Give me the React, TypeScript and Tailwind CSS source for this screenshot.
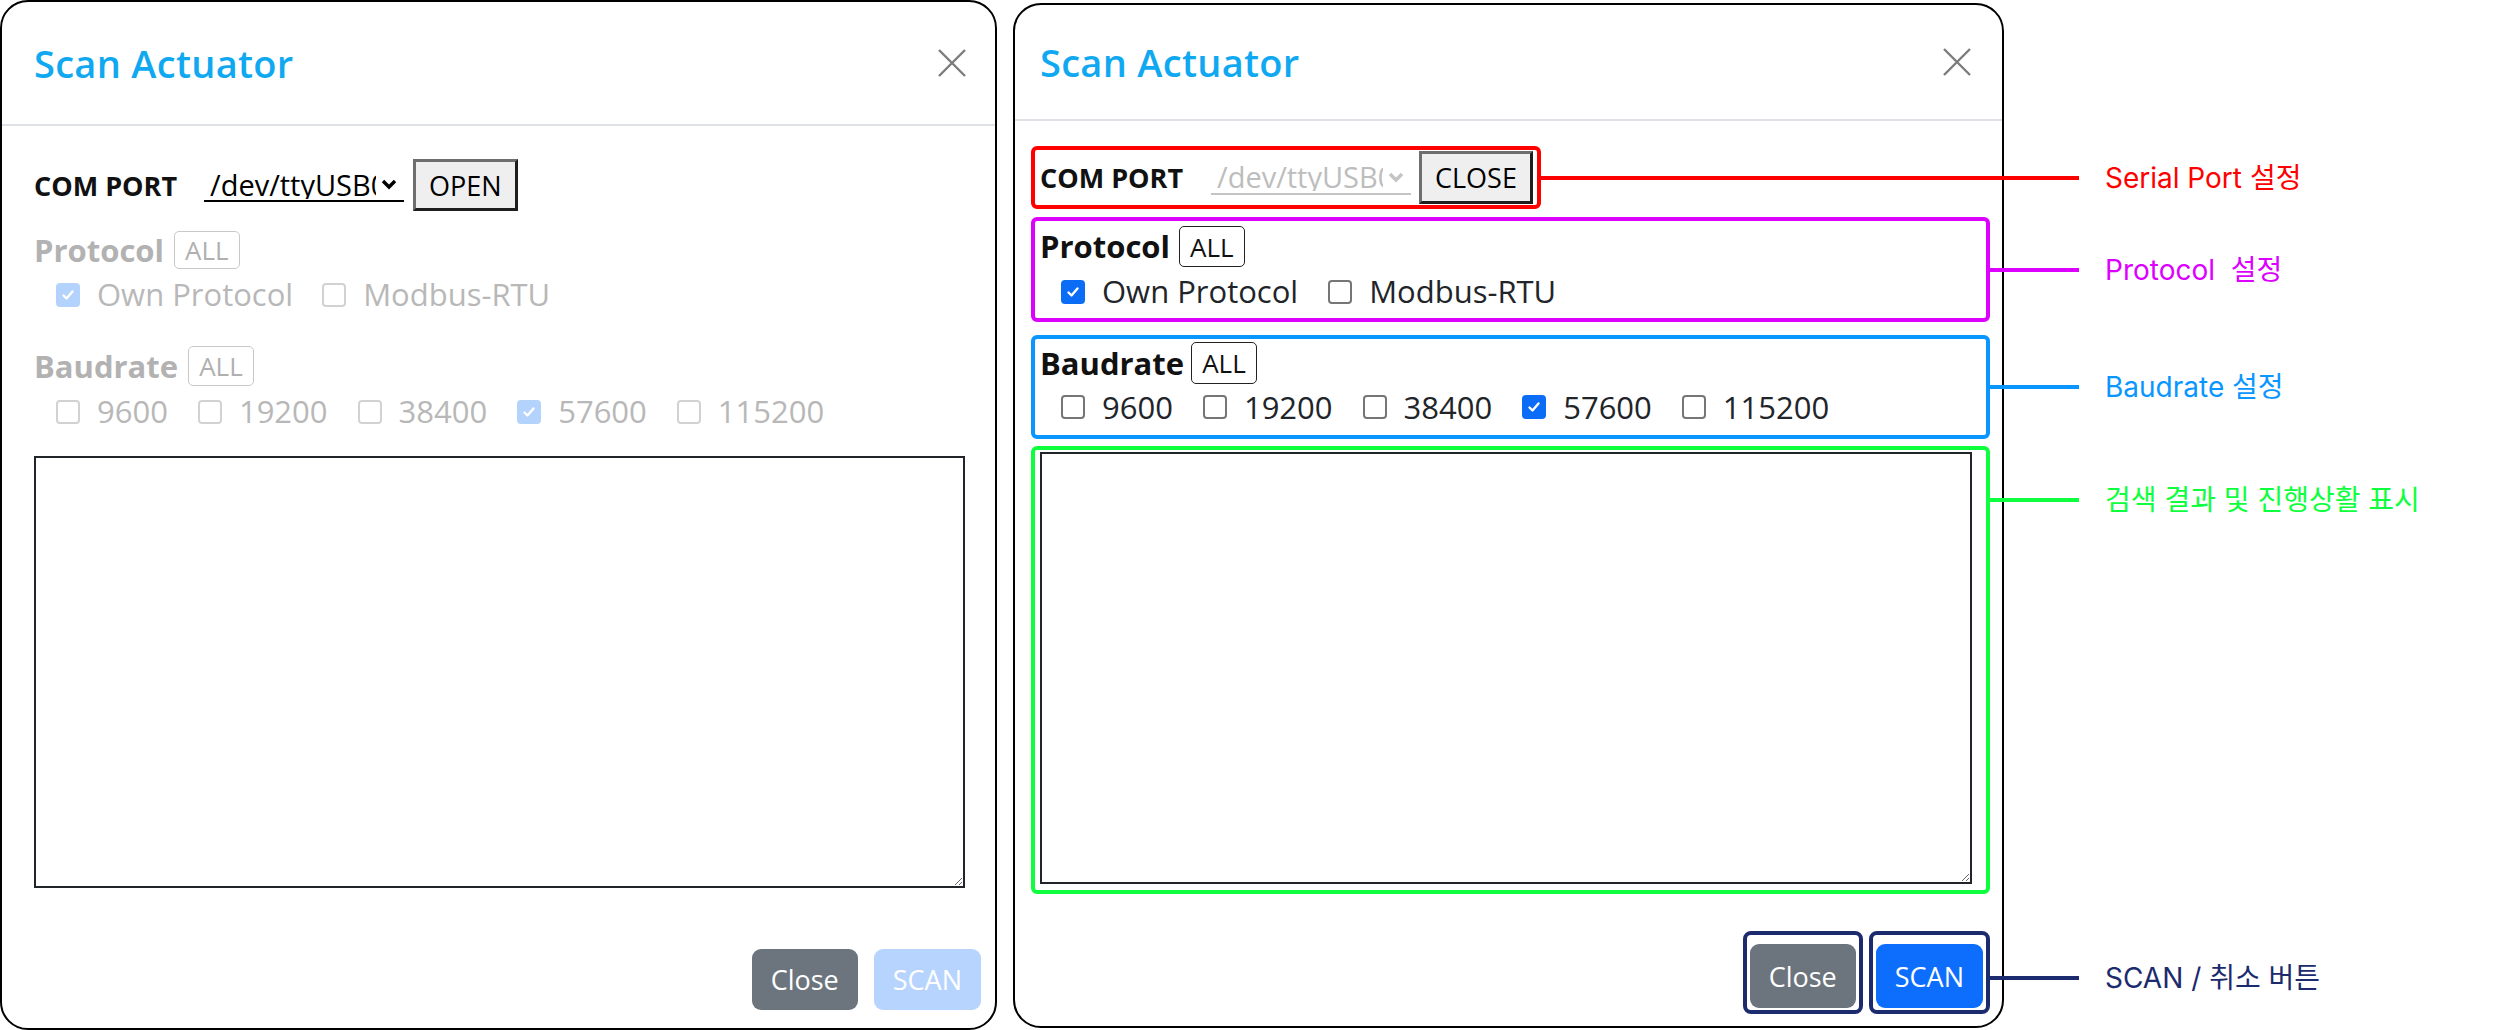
import clsx from "clsx";

type OptProps = { label: string; checked?: boolean; disabled?: boolean };

const protocols = [
  { label: "Own Protocol", checked: true },
  { label: "Modbus-RTU", checked: false },
];

const bauds = [
  { label: "9600", checked: false },
  { label: "19200", checked: false },
  { label: "38400", checked: false },
  { label: "57600", checked: true },
  { label: "115200", checked: false },
];

const XIcon = () => (
  <svg width="30" height="30" viewBox="0 0 30 30" fill="none">
    <path d="M2 2L28 28M28 2L2 28" stroke="#7c7c7c" strokeWidth="2.4" />
  </svg>
);

const Box = ({ checked, disabled }: { checked?: boolean; disabled?: boolean }) =>
  checked ? (
    <span
      className={clsx(
        "flex h-[24px] w-[24px] shrink-0 items-center justify-center rounded-[4px]",
        disabled ? "bg-[#b3d3fd]" : "bg-[#0b6cf5]"
      )}
    >
      <svg width="16" height="16" viewBox="0 0 16 16" fill="none">
        <path d="M3.5 8.5l3 3 6-7" stroke="white" strokeWidth="2.4" strokeLinecap="round" strokeLinejoin="round" />
      </svg>
    </span>
  ) : (
    <span
      className={clsx(
        "h-[24px] w-[24px] shrink-0 rounded-[4px] border-2 bg-white",
        disabled ? "border-[#d2d2d2]" : "border-[#767676]"
      )}
    />
  );

const Opt = ({ label, checked, disabled }: OptProps) => (
  <span className="flex items-center gap-[17px]">
    <Box checked={checked} disabled={disabled} />
    <span className={disabled ? "text-[#b8b8b8]" : "text-[#212529]"}>{label}</span>
  </span>
);

const AllBtn = ({ disabled, h }: { disabled?: boolean; h: string }) => (
  <span
    className={clsx(
      "flex items-center rounded-[5px] border-[1.5px] bg-white px-[10px] text-[26px]",
      h,
      disabled ? "border-[#c9c9c9] text-[#b0b0b0]" : "border-[#222] text-[#111]"
    )}
  >
    ALL
  </span>
);

const PortSelect = ({ disabled }: { disabled?: boolean }) => (
  <span
    className={clsx(
      "flex h-[34px] w-[200px] items-center border-b-2 pl-[6px] text-[29px]",
      disabled ? "border-[#c4c4c4] text-[#bdbdbd]" : "border-black text-black"
    )}
  >
    <span className="w-[166px] overflow-hidden whitespace-nowrap leading-none">/dev/ttyUSB0</span>
    <svg className="ml-[4px]" width="18" height="12" viewBox="0 0 18 12" fill="none">
      <path d="M3 3l6 6 6-6" stroke={disabled ? "#c4c4c4" : "#000"} strokeWidth="3.4" />
    </svg>
  </span>
);

const SysBtn = ({ children, h }: { children: string; h: string }) => (
  <span
    className={clsx(
      "flex items-center border-[3px] border-t-[#6e6e6e] border-l-[#6e6e6e] border-r-[#1e1e1e] border-b-[#1e1e1e] bg-[#efefef] px-[13px] text-[27px] text-black",
      h
    )}
  >
    {children}
  </span>
);

const Title = () => (
  <span className="text-[38px] font-semibold tracking-[0.3px] text-[#10a9f1]">Scan Actuator</span>
);

type CalloutProps = { pos: string; line: string; text: string; label: string };

const Callout = ({ pos, line, text, label }: CalloutProps) => (
  <div className={clsx("absolute left-full flex -translate-y-1/2 items-center", pos)}>
    <span className={clsx("h-[4px]", line)} />
    <span
      className={clsx(
        "ml-[26px] whitespace-pre font-['Inter','Noto_Sans_CJK_KR',sans-serif] text-[28px] leading-none",
        text
      )}
    >
      {label}
    </span>
  </div>
);

const LeftModal = () => (
  <div className="flex h-[1030px] w-[997px] shrink-0 flex-col rounded-[28px] border-2 border-black bg-white">
    <div className="flex h-[124px] shrink-0 items-center justify-between border-b-2 border-[#dee2e6] pl-[32px] pr-[28px]">
      <Title />
      <XIcon />
    </div>
    <div className="flex flex-col pl-[32px] pr-[30px] pt-[33px]">
      <div className="flex h-[52px] items-center">
        <span className="w-[143px] whitespace-nowrap text-[27px] font-bold text-[#111]">COM PORT</span>
        <span className="ml-[27px]">
          <PortSelect />
        </span>
        <span className="ml-[9px]">
          <SysBtn h="h-[52px]">OPEN</SysBtn>
        </span>
      </div>
      <div className="mt-[20px] flex h-[38px] items-center gap-[10px]">
        <span className="text-[31px] font-bold text-[#b2b2b2]">Protocol</span>
        <AllBtn disabled h="h-[38px]" />
      </div>
      <div className="mt-[13px] flex h-[25px] items-center gap-[29px] pl-[22px] text-[31px]">
        {protocols.map((p) => (
          <Opt key={p.label} label={p.label} checked={p.checked} disabled />
        ))}
      </div>
      <div className="mt-[39px] flex h-[40px] items-center gap-[10px]">
        <span className="text-[31px] font-bold text-[#b2b2b2]">Baudrate</span>
        <AllBtn disabled h="h-[40px]" />
      </div>
      <div className="mt-[12px] flex h-[27px] items-center gap-[30px] pl-[22px] text-[31px]">
        {bauds.map((b) => (
          <Opt key={b.label} label={b.label} checked={b.checked} disabled />
        ))}
      </div>
      <textarea className="mt-[31px] block h-[432px] w-full border-2 border-[#212529] bg-white" />
    </div>
    <div className="mt-[61px] flex justify-end gap-[16px] pr-[14px] text-[27px] text-white">
      <span className="flex h-[61px] items-center rounded-[9px] bg-[#6c757d] px-[19px]">Close</span>
      <span className="flex h-[61px] items-center rounded-[9px] bg-[#b6d4fe] px-[19px]">SCAN</span>
    </div>
  </div>
);

const RightModal = () => (
  <div className="mt-[3px] flex h-[1025px] w-[991px] shrink-0 flex-col rounded-[28px] border-2 border-black bg-white">
    <div className="flex h-[116px] shrink-0 items-center justify-between border-b-2 border-[#dee2e6] pl-[25px] pr-[30px]">
      <Title />
      <XIcon />
    </div>
    <div className="flex flex-col pl-[16px] pr-[12px] pt-[25px]">
      <div className="relative flex h-[63px] items-center self-start rounded-[6px] border-4 border-[#ff0000] pl-[5px] pr-[4px]">
        <span className="w-[144px] whitespace-nowrap text-[27px] font-bold text-[#111]">COM PORT</span>
        <span className="ml-[27px]">
          <PortSelect disabled />
        </span>
        <span className="ml-[8px]">
          <SysBtn h="h-[53px]">CLOSE</SysBtn>
        </span>
        <Callout pos="top-1/2" line="w-[542px] bg-[#ff0000]" text="text-[#ff0000]" label="Serial Port 설정" />
      </div>
      <div className="relative mt-[8px] flex h-[105px] flex-col rounded-[6px] border-4 border-[#dc00ff] pl-[5px] pt-[5px]">
        <div className="flex h-[41px] items-center gap-[9px]">
          <span className="text-[31px] font-bold text-[#111]">Protocol</span>
          <AllBtn h="h-[41px]" />
        </div>
        <div className="mt-[12px] flex h-[25px] items-center gap-[30px] pl-[21px] text-[31px]">
          {protocols.map((p) => (
            <Opt key={p.label} label={p.label} checked={p.checked} />
          ))}
        </div>
        <Callout pos="top-1/2" line="w-[93px] bg-[#dc00ff]" text="text-[#dc00ff]" label="Protocol  설정" />
      </div>
      <div className="relative mt-[13px] flex h-[104px] flex-col rounded-[6px] border-4 border-[#0a96ff] pl-[5px] pt-[3px]">
        <div className="flex h-[42px] items-center gap-[7px]">
          <span className="text-[31px] font-bold text-[#111]">Baudrate</span>
          <AllBtn h="h-[42px]" />
        </div>
        <div className="mt-[10px] flex h-[26px] items-center gap-[30px] pl-[21px] text-[31px]">
          {bauds.map((b) => (
            <Opt key={b.label} label={b.label} checked={b.checked} />
          ))}
        </div>
        <Callout pos="top-1/2" line="w-[93px] bg-[#0a96ff]" text="text-[#0a96ff]" label="Baudrate 설정" />
      </div>
      <div className="relative mt-[7px] h-[448px] rounded-[6px] border-4 border-[#0dff3d] pl-[5px] pr-[14px] pt-[2px]">
        <textarea className="block h-[432px] w-full border-2 border-[#212529] bg-white" />
        <Callout pos="top-[50px]" line="w-[93px] bg-[#0dff3d]" text="text-[#0dff3d]" label="검색 결과 및 진행상활 표시" />
      </div>
    </div>
    <div className="mt-[37px] flex justify-end gap-[6px] pr-[12px] text-[27px] text-white">
      <span className="rounded-[8px] border-4 border-[#1c2a6e] px-[3px] pb-[2px] pt-[9px]">
        <span className="flex h-[64px] items-center rounded-[9px] bg-[#6c757d] px-[19px]">Close</span>
      </span>
      <span className="relative rounded-[8px] border-4 border-[#1c2a6e] px-[3px] pb-[2px] pt-[9px]">
        <span className="flex h-[64px] items-center rounded-[9px] bg-[#0d6efd] px-[19px]">SCAN</span>
        <Callout pos="top-[43px]" line="w-[93px] bg-[#1c2a6e]" text="text-[#1c2a6e]" label="SCAN / 취소 버튼" />
      </span>
    </div>
  </div>
);

export default function App() {
  return (
    <div className="flex h-[1030px] w-[2502px] gap-[16px] overflow-hidden bg-white font-['Open_Sans','Noto_Sans',sans-serif] leading-none">
      <LeftModal />
      <RightModal />
    </div>
  );
}
